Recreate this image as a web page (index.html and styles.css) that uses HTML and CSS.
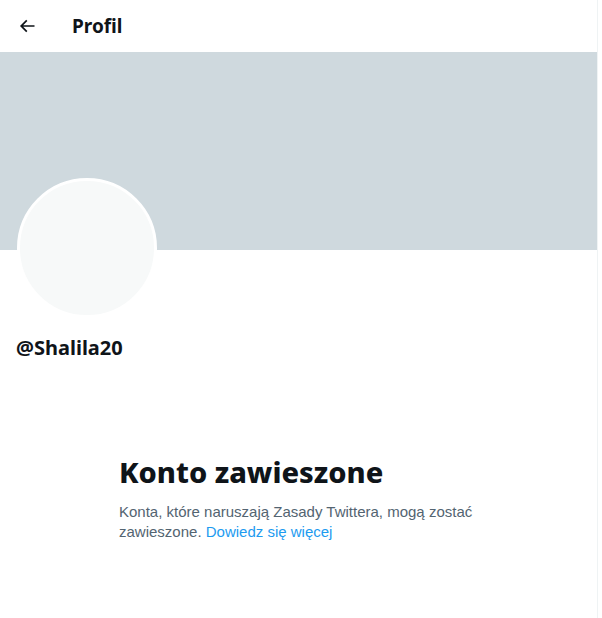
FILE: index.html
```html
<!DOCTYPE html>
<html lang="pl">
<head>
    <meta charset="UTF-8">
    <title>Profil</title>
    <link rel="stylesheet" href="styles.css">
</head>
<body>
<div class="column">
    <!--naglowek-->
    <div class="topbar">
        <span class="back">
            <svg viewBox="0 0 24 24" width="20" height="20"><path d="M7.414 13l5.043 5.04-1.414 1.42L3.586 12l7.457-7.46 1.414 1.42L7.414 11H21v2H7.414z"/></svg>
        </span>
        <h2 class="title">Profil</h2>
    </div>
    <!--baner i avatar-->
    <div class="banner"></div>
    <div class="profile">
        <div class="avatar"></div>
        <div class="handle">@Shalila20</div>
    </div>
    <!--komunikat-->
    <div class="notice">
        <h1>Konto zawieszone</h1>
        <p>Konta, które naruszają Zasady Twittera, mogą zostać zawieszone. <a href="#">Dowiedz się więcej</a></p>
    </div>
</div>
</body>
</html>
```

FILE: styles.css
```css
body{
    margin:0;
    background-color:#fff;
    font-family:"Noto Sans","Liberation Sans",Arial,sans-serif;
    color:#0f1419;
}
.column{
    width:597px;
    min-height:618px;
    border-right:1px solid #eff3f4;
}
.topbar{
    height:52px;
    display:flex;
    align-items:center;
    padding:0 16px;
    box-sizing:border-box;
}
.back{
    width:20px;
    height:20px;
    display:flex;
    margin-left:1px;
}
.back svg{
    fill:#0f1419;
}
.title{
    margin:0 0 0 35px;
    font-size:19px;
    font-weight:bold;
    line-height:24px;
}
.banner{
    height:198px;
    background-color:#cfd9de;
}
.profile{
    padding:0 16px;
}
.avatar{
    width:134px;
    height:134px;
    border:3px solid #fff;
    border-radius:50%;
    background-color:#f7f9f9;
    margin-top:-72px;
    margin-left:1px;
}
.handle{
    margin-top:18px;
    font-size:20px;
    font-weight:bold;
    line-height:24px;
}
.notice{
    width:370px;
    margin:94px 0 0 119px;
}
.notice h1{
    margin:0;
    font-size:29px;
    font-weight:800;
    line-height:36px;
}
.notice p{
    margin:12px 0 0 0;
    font-family:"Liberation Sans",Arial,sans-serif;
    font-size:15px;
    line-height:20px;
    color:#536471;
}
.notice a{
    color:#1d9bf0;
    text-decoration:none;
}
```
